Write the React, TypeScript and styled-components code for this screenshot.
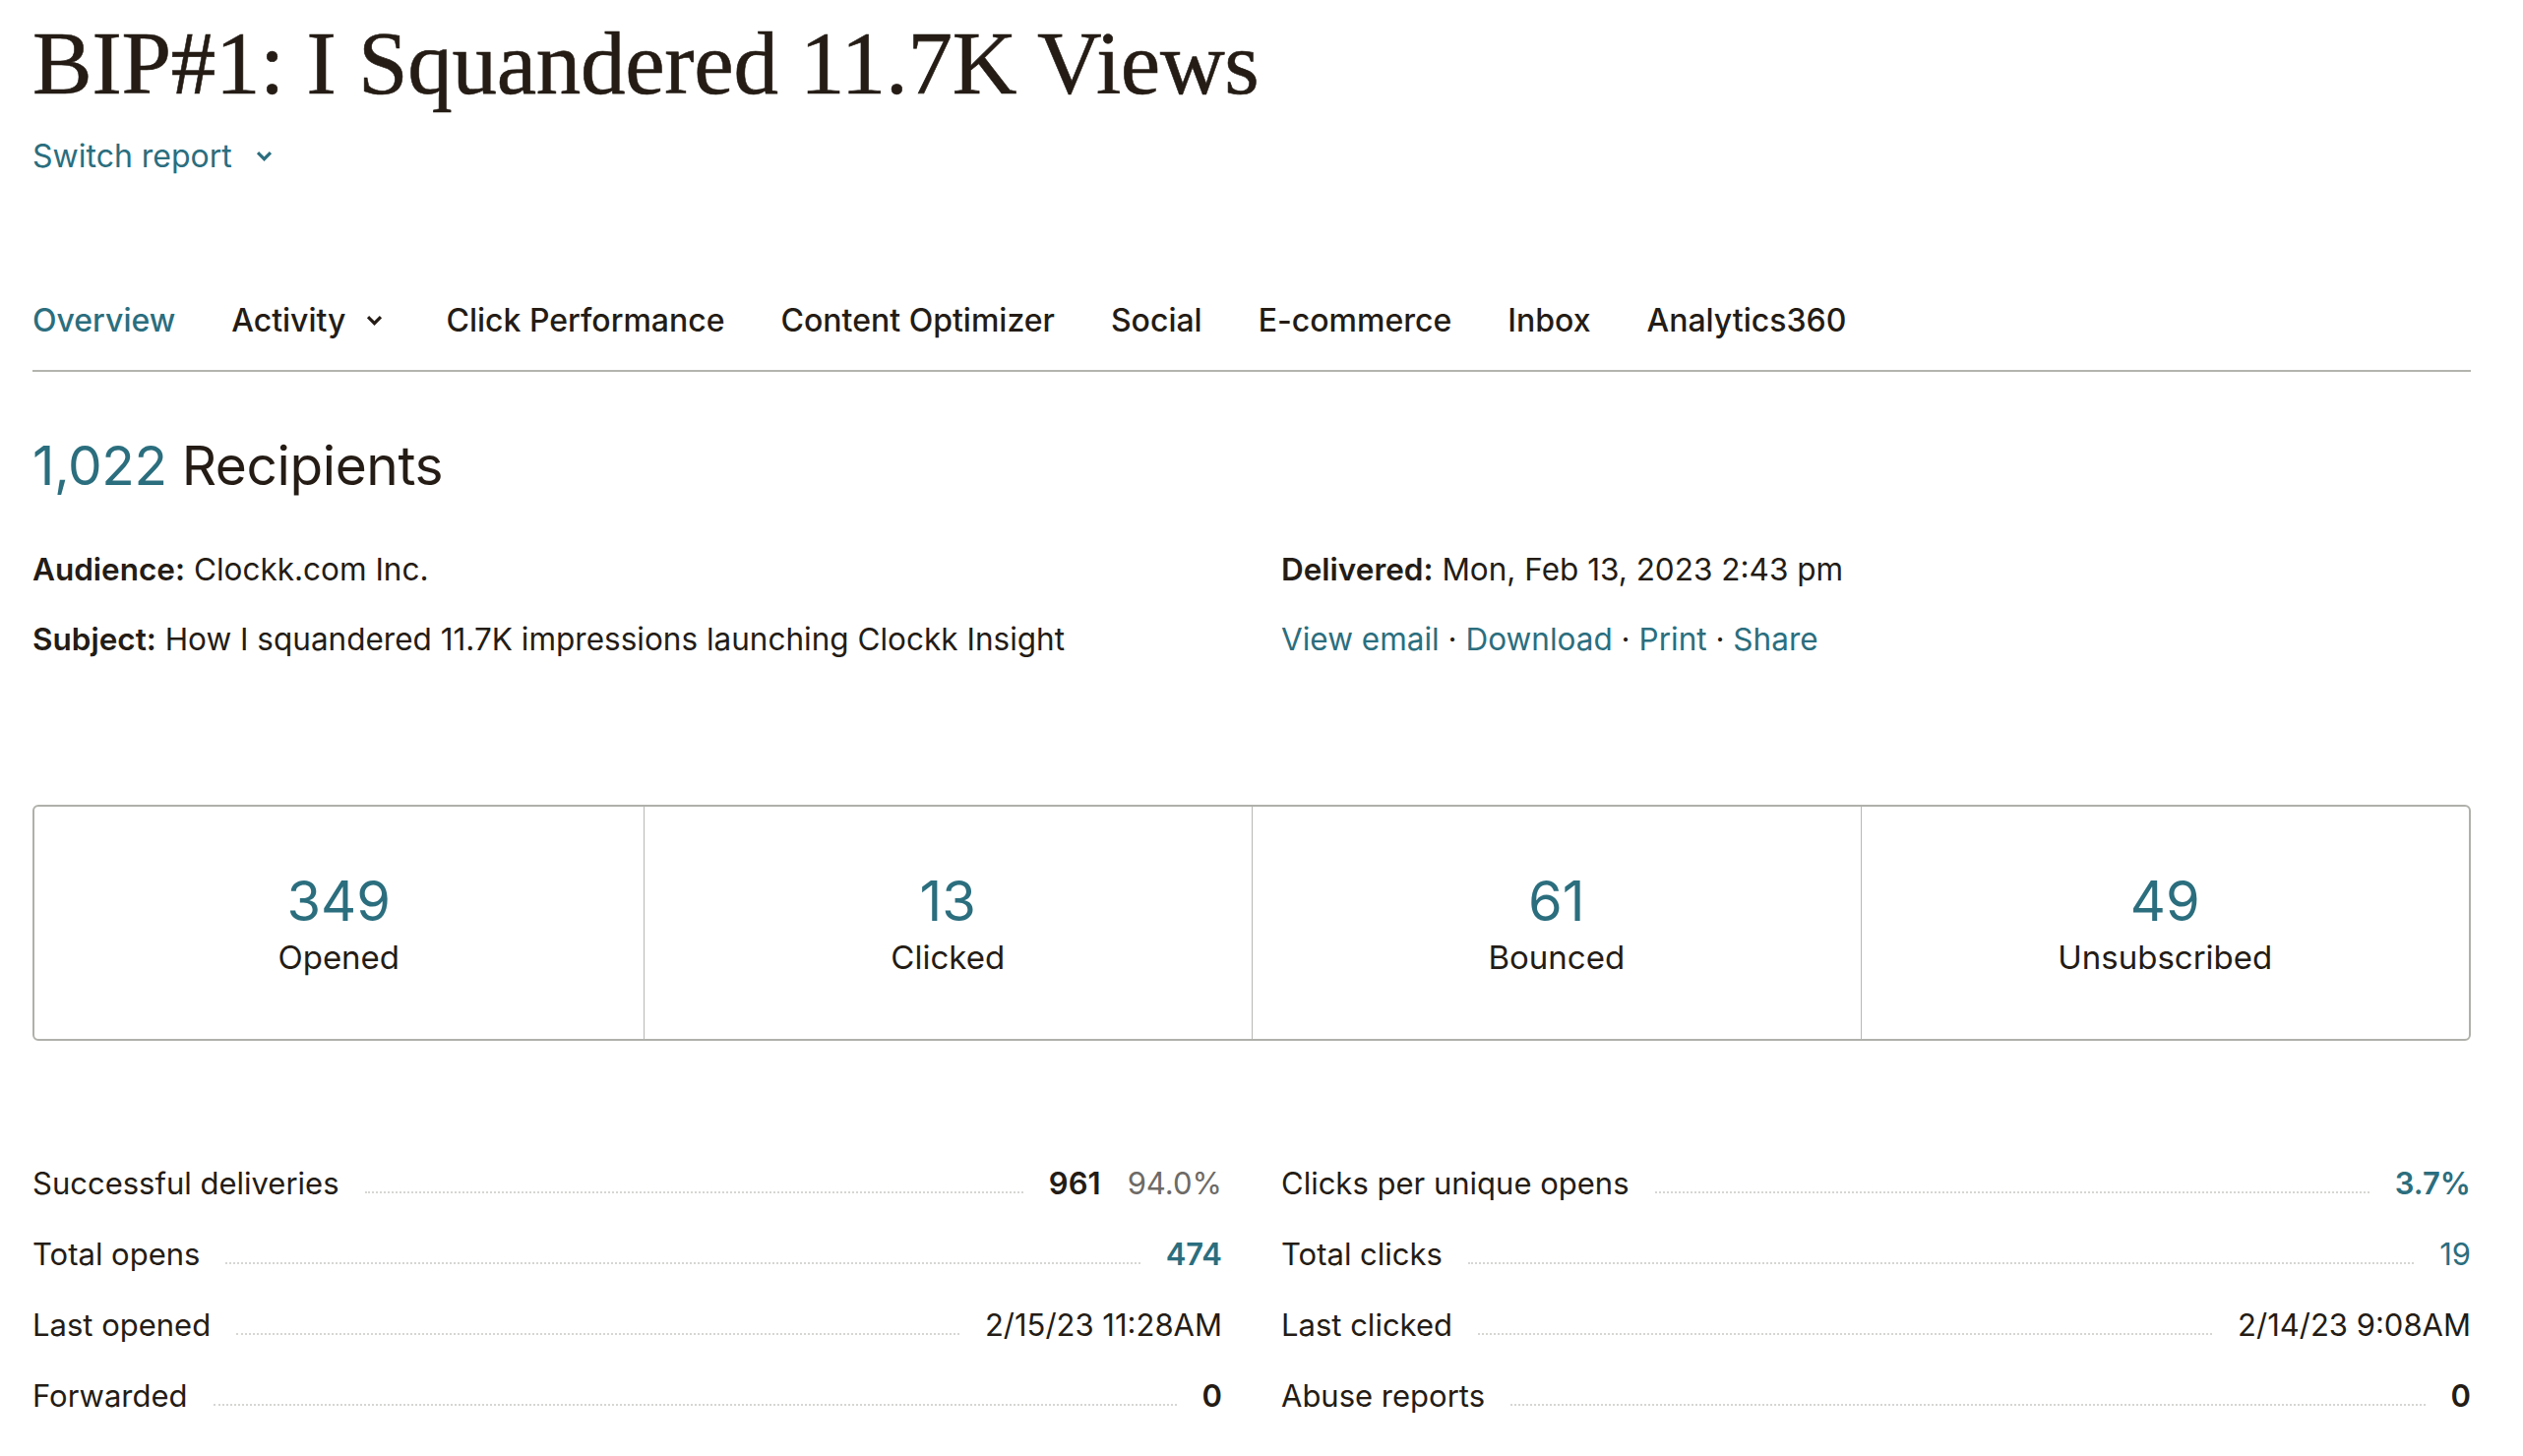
import * as React from 'react';
import styled, { createGlobalStyle } from 'styled-components';

const GlobalStyle = createGlobalStyle`
  html, body {
    margin: 0;
    padding: 0;
    background: #ffffff;
  }
  body {
    font-family: Inter, 'Liberation Sans', sans-serif;
    color: #241c15;
  }
`;

const TEAL = '#2b6e7e';
const INK = '#241c15';

type Stat = { value: string; label: string };
type Row = { label: string; value: React.ReactNode };

const stats: Stat[] = [
  { value: '349', label: 'Opened' },
  { value: '13', label: 'Clicked' },
  { value: '61', label: 'Bounced' },
  { value: '49', label: 'Unsubscribed' },
];

const tabs = [
  { name: 'Overview', active: true },
  { name: 'Activity', menu: true },
  { name: 'Click Performance' },
  { name: 'Content Optimizer' },
  { name: 'Social' },
  { name: 'E-commerce' },
  { name: 'Inbox' },
  { name: 'Analytics360' },
];

function Chevron({ size = 18 }: { size?: number }) {
  return (
    <svg width={size} height={size} viewBox="0 0 16 16" fill="none">
      <polyline
        points="3,5 8,10 13,5"
        stroke="currentColor"
        strokeWidth="3"
        strokeLinecap="square"
        strokeLinejoin="miter"
      />
    </svg>
  );
}

export default function App() {
  const leftRows: Row[] = [
    {
      label: 'Successful deliveries',
      value: (
        <>
          <Value bold>961</Value>
          <Muted>94.0%</Muted>
        </>
      ),
    },
    { label: 'Total opens', value: <Value teal bold>474</Value> },
    { label: 'Last opened', value: <Value>2/15/23 11:28AM</Value> },
    { label: 'Forwarded', value: <Value bold>0</Value> },
  ];
  const rightRows: Row[] = [
    { label: 'Clicks per unique opens', value: <Value teal bold>3.7%</Value> },
    { label: 'Total clicks', value: <Value teal>19</Value> },
    { label: 'Last clicked', value: <Value>2/14/23 9:08AM</Value> },
    { label: 'Abuse reports', value: <Value bold>0</Value> },
  ];

  return (
    <Page>
      <GlobalStyle />
      <Title>BIP#1: I Squandered 11.7K Views</Title>
      <SwitchLink>
        Switch report
        <Chevron size={17} />
      </SwitchLink>

      <Tabs>
        {tabs.map((t) => (
          <Tab key={t.name} active={t.active}>
            {t.name}
            {t.menu && (
              <TabChevron>
                <Chevron size={17} />
              </TabChevron>
            )}
          </Tab>
        ))}
      </Tabs>

      <Recipients>
        <span>1,022</span> Recipients
      </Recipients>

      <Meta>
        <MetaLine>
          <b>Audience:</b> Clockk.com Inc.
        </MetaLine>
        <MetaLine>
          <b>Delivered:</b> Mon, Feb 13, 2023 2:43 pm
        </MetaLine>
        <MetaLine>
          <b>Subject:</b> How I squandered 11.7K impressions launching Clockk Insight
        </MetaLine>
        <MetaLine>
          <A>View email</A> <Dot>·</Dot> <A>Download</A> <Dot>·</Dot> <A>Print</A>{' '}
          <Dot>·</Dot> <A>Share</A>
        </MetaLine>
      </Meta>

      <StatBox>
        {stats.map((s) => (
          <StatCell key={s.label}>
            <StatNumber>{s.value}</StatNumber>
            <StatLabel>{s.label}</StatLabel>
          </StatCell>
        ))}
      </StatBox>

      <Lists>
        {[leftRows, rightRows].map((rows, i) => (
          <List key={i}>
            {rows.map((r) => (
              <ListRow key={r.label}>
                <RowLabel>{r.label}</RowLabel>
                <Leader />
                <Values>{r.value}</Values>
              </ListRow>
            ))}
          </List>
        ))}
      </Lists>
    </Page>
  );
}

const Page = styled.div`
  padding: 14px 53px 40px 33px;
  font-family: Inter, 'Liberation Sans', sans-serif;
  color: ${INK};
`;

const Title = styled.h1`
  margin: 0;
  font-family: 'Liberation Serif', 'Times New Roman', serif;
  font-weight: 400;
  font-size: 91px;
  line-height: 102px;
  letter-spacing: -0.3px;
  color: ${INK};
  -webkit-text-stroke: 0.6px ${INK};
`;

const SwitchLink = styled.a`
  display: inline-flex;
  align-items: center;
  gap: 24px;
  margin-top: 23px;
  font-size: 32px;
  line-height: 40px;
  color: ${TEAL};
  cursor: pointer;
`;

const Tabs = styled.nav`
  display: flex;
  gap: 57px;
  margin-top: 127px;
  padding-bottom: 30px;
  border-bottom: 2px solid #b4b4af;
`;

const Tab = styled.a<{ active?: boolean }>`
  display: inline-flex;
  align-items: center;
  font-size: 32px;
  line-height: 40px;
  font-weight: 500;
  color: ${(p) => (p.active ? TEAL : INK)};
  cursor: pointer;
`;

const TabChevron = styled.span`
  display: inline-flex;
  margin: 0 8px 0 20px;
`;

const Recipients = styled.h2`
  margin: 61px 0 0 0;
  font-size: 55px;
  line-height: 68px;
  font-weight: 400;
  letter-spacing: -0.4px;
  color: ${INK};

  span {
    color: ${TEAL};
  }
`;

const Meta = styled.div`
  display: grid;
  grid-template-columns: 1fr 1fr;
  column-gap: 60px;
  row-gap: 31px;
  margin-top: 52px;
`;

const MetaLine = styled.div`
  font-size: 31.5px;
  line-height: 40px;

  b {
    font-weight: 600;
  }
`;

const A = styled.a`
  color: ${TEAL};
  cursor: pointer;
`;

const Dot = styled.span`
  color: ${INK};
`;

const StatBox = styled.div`
  display: grid;
  grid-template-columns: repeat(4, 1fr);
  margin-top: 148px;
  border: 2px solid #b0b0ab;
  border-radius: 6px;
`;

const StatCell = styled.div`
  display: flex;
  flex-direction: column;
  align-items: center;
  gap: 5px;
  padding: 64px 0 63px 0;

  & + & {
    border-left: 1px solid #b8b8b4;
  }
`;

const StatNumber = styled.div`
  font-size: 56px;
  line-height: 64px;
  color: ${TEAL};
`;

const StatLabel = styled.div`
  font-size: 33px;
  line-height: 40px;
`;

const Lists = styled.div`
  display: grid;
  grid-template-columns: 1fr 1fr;
  column-gap: 60px;
  margin-top: 125px;
`;

const List = styled.div`
  display: flex;
  flex-direction: column;
  gap: 32px;
`;

const ListRow = styled.div`
  display: flex;
  align-items: flex-end;
  font-size: 31px;
  line-height: 40px;
`;

const RowLabel = styled.span`
  white-space: nowrap;
`;

const Leader = styled.span`
  flex: 1;
  margin: 0 26px 10px 26px;
  border-bottom: 2px dotted #d6d6d3;
`;

const Values = styled.span`
  display: inline-flex;
  gap: 27px;
  white-space: nowrap;
`;

const Value = styled.span<{ bold?: boolean; teal?: boolean }>`
  font-weight: ${(p) => (p.bold ? 600 : 400)};
  color: ${(p) => (p.teal ? TEAL : INK)};
`;

const Muted = styled.span`
  color: #6d6a66;
`;
